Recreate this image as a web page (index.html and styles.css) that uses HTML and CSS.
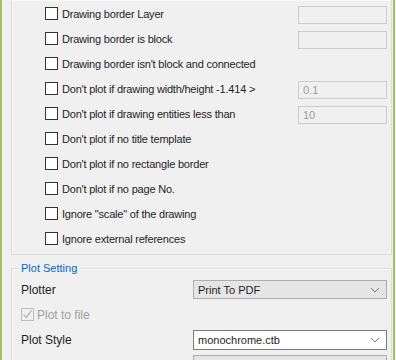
FILE: index.html
```html
<!DOCTYPE html>
<html lang="en">
<head>
    <meta charset="UTF-8">
    <title>Plot Options</title>
    <link rel="stylesheet" href="styles.css">
</head>
<body>

<div class="frame">
    <div class="group group-top">
        <div class="row">
            <span class="check"></span>
            <span class="label">Drawing border Layer</span>
            <span class="field"></span>
        </div>
        <div class="row">
            <span class="check"></span>
            <span class="label">Drawing border is block</span>
            <span class="field"></span>
        </div>
        <div class="row">
            <span class="check"></span>
            <span class="label">Drawing border isn't block and connected</span>
        </div>
        <div class="row">
            <span class="check"></span>
            <span class="label">Don't plot if drawing width/height -1.414 &gt;</span>
            <span class="field">0.1</span>
        </div>
        <div class="row">
            <span class="check"></span>
            <span class="label">Don't plot if drawing entities less than</span>
            <span class="field">10</span>
        </div>
        <div class="row">
            <span class="check"></span>
            <span class="label">Don't plot if no title template</span>
        </div>
        <div class="row">
            <span class="check"></span>
            <span class="label">Don't plot if no rectangle border</span>
        </div>
        <div class="row">
            <span class="check"></span>
            <span class="label">Don't plot if no page No.</span>
        </div>
        <div class="row">
            <span class="check"></span>
            <span class="label">Ignore "scale" of the drawing</span>
        </div>
        <div class="row">
            <span class="check"></span>
            <span class="label">Ignore external references</span>
        </div>
    </div>

    <div class="group group-plot">
        <div class="legend">Plot Setting</div>
        <div class="prow">
            <span class="plabel">Plotter</span>
            <span class="select">Print To PDF<svg width="10" height="6" viewBox="0 0 10 6"><path d="M1 1l4 4 4-4" fill="none" stroke="#7a7a7a" stroke-width="1"/></svg></span>
        </div>
        <div class="prow">
            <span class="check checked"><svg width="11" height="11" viewBox="0 0 11 11"><path d="M1.5 5.5l2.8 3 5.2-7" fill="none" stroke="#b8b8b8" stroke-width="1.3"/></svg></span>
            <span class="plabel muted">Plot to file</span>
        </div>
        <div class="prow">
            <span class="plabel">Plot Style</span>
            <span class="select white">monochrome.ctb<svg width="10" height="6" viewBox="0 0 10 6"><path d="M1 1l4 4 4-4" fill="none" stroke="#7a7a7a" stroke-width="1"/></svg></span>
        </div>
        <div class="prow">
            <span class="plabel">Preset Format</span>
            <span class="select"></span>
        </div>
    </div>
</div>

</body>
</html>
```

FILE: styles.css
```css
body {
    margin: 0;
    width: 396px;
    height: 360px;
    overflow: hidden;
    background: #f0f0f0;
    font-family: "Liberation Sans", Arial, sans-serif;
    font-size: 11px;
    color: #1e1e1e;
}
.frame {
    height: 360px;
    width: 395px;
    border-left: 2px solid #a8bf62;
    border-right: 2px solid #a8bf62;
    padding: 0 1px 0 9px;
    box-sizing: border-box;
}
.group {
    border: 1px solid #dcdcdc;
    box-shadow: inset 1px 1px 0 #fafafa;
}
.group-top {
    border-top: none;
    padding: 1px 0 3px 0;
}
.row {
    display: flex;
    align-items: center;
    height: 25px;
    padding-left: 33px;
}
.check {
    width: 13px;
    height: 13px;
    border: 1px solid #333333;
    background: #ffffff;
    box-sizing: border-box;
    flex: none;
    display: flex;
    align-items: center;
    justify-content: center;
}
.check.checked {
    border-color: #bcbcbc;
    background: #f0f0f0;
}
.label {
    margin-left: 4px;
    flex: 1;
    white-space: nowrap;
    letter-spacing: -0.2px;
}
.field {
    width: 89px;
    height: 18px;
    box-sizing: border-box;
    border: 1px solid #cccccc;
    background: #f0f0f0;
    color: #9a9a9a;
    padding: 2px 4px;
    margin-right: 4px;
    margin-top: 2px;
}
.group-plot {
    margin-top: 13px;
    position: relative;
    padding: 8px 0 0 9px;
    height: 120px;
}
.legend {
    position: absolute;
    top: -7px;
    left: 6px;
    padding: 0 3px;
    background: #f0f0f0;
    color: #0066cc;
}
.prow {
    display: flex;
    align-items: center;
    height: 25px;
}
.plabel {
    width: 172px;
    font-size: 12px;
    white-space: nowrap;
}
.plabel.muted {
    margin-left: 3px;
    width: auto;
    color: #a0a0a0;
}
.select {
    width: 194px;
    height: 19px;
    box-sizing: border-box;
    border: 1px solid #adadad;
    background: #e5e5e5;
    display: flex;
    align-items: center;
    justify-content: space-between;
    padding: 0 6px 0 4px;
    font-size: 11px;
}
.select.white {
    background: #ffffff;
    border-color: #7a7a7a;
    height: 20px;
}
```
